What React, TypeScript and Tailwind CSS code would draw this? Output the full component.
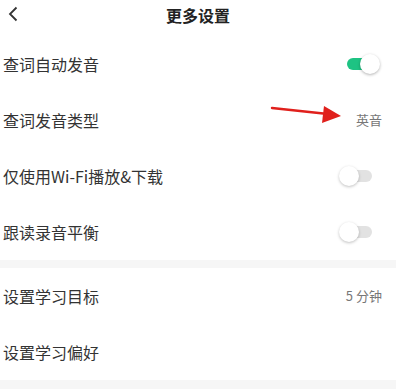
import React from 'react';

const font = { fontFamily: '"Noto Sans CJK SC", "Noto Sans", sans-serif' };

const Toggle: React.FC<{ on?: boolean }> = ({ on }) =>
  on ? (
    <div className="relative mr-[16px] h-[20px] w-[33px]">
      <div className="absolute left-0 top-[4px] h-[12px] w-[30px] rounded-full bg-[#1ec383]" />
      <div className="absolute right-0 top-0 h-[20px] w-[20px] rounded-full bg-white shadow-[0_1px_3px_rgba(0,0,0,0.3)]" />
    </div>
  ) : (
    <div className="relative mr-[24px] h-[20px] w-[33px]">
      <div className="absolute right-0 top-[4px] h-[12px] w-[30px] rounded-full bg-[#e2e2e2]" />
      <div className="absolute left-0 top-0 h-[20px] w-[20px] rounded-full bg-white shadow-[0_1px_3px_rgba(0,0,0,0.25)]" />
    </div>
  );

const Row: React.FC<{ label: string; children?: React.ReactNode }> = ({ label, children }) => (
  <div className="relative flex h-[56px] items-center justify-between pl-[3px]">
    <span className="text-[16px] text-[#333]">{label}</span>
    {children}
  </div>
);

const Value: React.FC<{ text: string }> = ({ text }) => (
  <span className="mr-[14px] text-[13px] text-[#777]">{text}</span>
);

export default function App() {
  return (
    <div className="h-[389px] w-[396px] overflow-hidden bg-white" style={font}>
      <div className="relative flex h-[36px] items-start justify-center pt-[4px]">
        <svg className="absolute left-[7px] top-[6px]" width="12" height="16" viewBox="0 0 12 16">
          <path d="M9.5 1.5 L3 8 L9.5 14.5" fill="none" stroke="#333" strokeWidth="1.8" />
        </svg>
        <span className="text-[16px] font-bold leading-[22px] text-[#222]">更多设置</span>
      </div>
      <Row label="查词自动发音">
        <Toggle on />
      </Row>
      <Row label="查词发音类型">
        {/* red annotation arrow pointing at the value */}
        <svg className="absolute left-[270px] top-[12px]" width="74" height="24" viewBox="0 0 74 24">
          <line x1="2" y1="4" x2="58" y2="10" stroke="#e0201c" strokeWidth="2.4" strokeLinecap="round" />
          <polygon points="54,2 71,12 52,19" fill="#e0201c" />
        </svg>
        <Value text="英音" />
      </Row>
      <Row label="仅使用Wi-Fi播放&下载">
        <Toggle />
      </Row>
      <Row label="跟读录音平衡">
        <Toggle />
      </Row>
      <div className="h-[8px] bg-[#f6f6f6]" />
      <Row label="设置学习目标">
        <Value text="5 分钟" />
      </Row>
      <Row label="设置学习偏好" />
      <div className="h-[20px] bg-[#f6f6f6]" />
    </div>
  );
}
